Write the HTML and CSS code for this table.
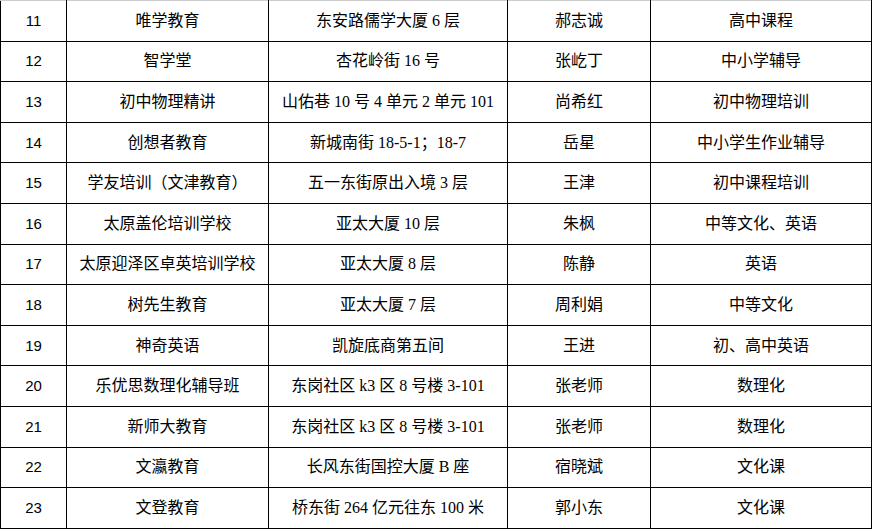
FILE: index.html
```html
<!DOCTYPE html>
<html lang="zh-CN">
<head>
<meta charset="utf-8">
<title>培训机构</title>
<link rel="stylesheet" href="styles.css">
</head>
<body>
<table class="list">
  <colgroup>
    <col class="c-no"><col class="c-name"><col class="c-addr"><col class="c-person"><col class="c-course">
  </colgroup>
  <tbody>
    <tr><td class="no">11</td><td>唯学教育</td><td>东安路儒学大厦 6 层</td><td>郝志诚</td><td>高中课程</td></tr>
    <tr><td class="no">12</td><td>智学堂</td><td>杏花岭街 16 号</td><td>张屹丁</td><td>中小学辅导</td></tr>
    <tr><td class="no">13</td><td>初中物理精讲</td><td>山佑巷 10 号 4 单元 2 单元 101</td><td>尚希红</td><td>初中物理培训</td></tr>
    <tr><td class="no">14</td><td>创想者教育</td><td>新城南街 18-5-1；18-7</td><td>岳星</td><td>中小学生作业辅导</td></tr>
    <tr><td class="no">15</td><td>学友培训（文津教育）</td><td>五一东街原出入境 3 层</td><td>王津</td><td>初中课程培训</td></tr>
    <tr><td class="no">16</td><td>太原盖伦培训学校</td><td>亚太大厦 10 层</td><td>朱枫</td><td>中等文化、英语</td></tr>
    <tr><td class="no">17</td><td>太原迎泽区卓英培训学校</td><td>亚太大厦 8 层</td><td>陈静</td><td>英语</td></tr>
    <tr><td class="no">18</td><td>树先生教育</td><td>亚太大厦 7 层</td><td>周利娟</td><td>中等文化</td></tr>
    <tr><td class="no">19</td><td>神奇英语</td><td>凯旋底商第五间</td><td>王进</td><td>初、高中英语</td></tr>
    <tr><td class="no">20</td><td>乐优思数理化辅导班</td><td>东岗社区 k3 区 8 号楼 3-101</td><td>张老师</td><td>数理化</td></tr>
    <tr><td class="no">21</td><td>新师大教育</td><td>东岗社区 k3 区 8 号楼 3-101</td><td>张老师</td><td>数理化</td></tr>
    <tr><td class="no">22</td><td>文瀛教育</td><td>长风东街国控大厦 B 座</td><td>宿晓斌</td><td>文化课</td></tr>
    <tr><td class="no">23</td><td>文登教育</td><td>桥东街 264 亿元往东 100 米</td><td>郭小东</td><td>文化课</td></tr>
  </tbody>
</table>
</body>
</html>
```

FILE: styles.css
```css
html, body {
  margin: 0;
  padding: 0;
  background: #fff;
}
body {
  font-family: "Liberation Serif", "Noto Sans CJK SC", serif;
  font-size: 16px;
  color: #000;
}
.list {
  border-collapse: collapse;
  table-layout: fixed;
  width: 871px;
  margin-left: 0;
}
.c-no { width: 66px; }
.c-name { width: 202px; }
.c-addr { width: 239px; }
.c-person { width: 143px; }
.c-course { width: 221px; }
.list td {
  border: 1px solid #000;
  height: 39.6px;
  padding: 0;
  text-align: center;
  vertical-align: middle;
  line-height: 20px;
  white-space: nowrap;
}
.list td.no {
  font-family: "Liberation Sans", "Noto Sans CJK SC", sans-serif;
  font-size: 15px;
}
.list tr:first-child td {
  border-top-color: #ccc;
}
```
